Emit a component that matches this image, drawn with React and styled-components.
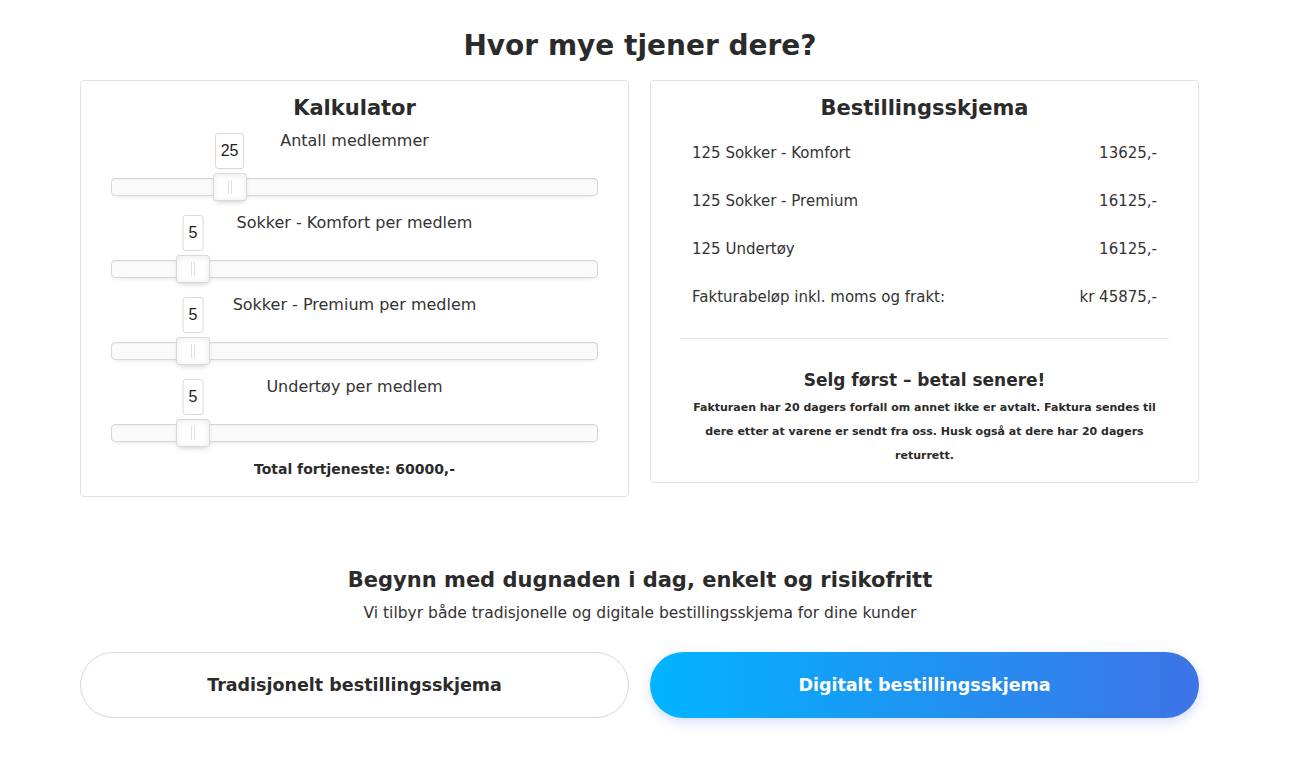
import React from 'react'
import styled, { createGlobalStyle } from 'styled-components'

const GlobalStyle = createGlobalStyle`
  body {
    margin: 0;
    background: #fff;
    color: #333;
    font-family: "DejaVu Sans", "Noto Sans", sans-serif;
  }
`

const Page = styled.div`
  width: 1120px;
  margin-left: 80px;
  padding-top: 28px;
  padding-bottom: 40px;
`

const Title = styled.h1`
  margin: 0 0 16px;
  font-size: 28px;
  line-height: 36px;
  font-weight: 700;
  text-align: center;
  color: #2b2b2b;
`

const Columns = styled.div`
  display: grid;
  grid-template-columns: 549px 549px;
  gap: 21px;
  align-items: start;
`

const Card = styled.div`
  display: flex;
  flex-direction: column;
  border: 1px solid #e2e2e2;
  border-radius: 4px;
  background: #fff;
  padding: ${(p) => p.$pad};
`

const CardTitle = styled.h2`
  margin: 0 0 ${(p) => p.$gap}px;
  font-size: 21px;
  line-height: 30px;
  font-weight: 700;
  text-align: center;
  color: #2b2b2b;
`

const SliderRow = styled.div`
  display: flex;
  flex-direction: column;
  margin-bottom: 17px;
`

const SliderLabel = styled.div`
  font-size: 16px;
  line-height: 20px;
  text-align: center;
  color: #333;
  margin-bottom: 27px;
`

const Track = styled.div`
  position: relative;
  height: 16px;
  background: #fafafa;
  border: 1px solid #d6d6d6;
  border-radius: 4px;
  box-shadow: inset 0 1px 1px #f0f0f0, 0 3px 6px -5px #bbb;
`

const Handle = styled.div`
  position: absolute;
  top: -6px;
  width: 32px;
  height: 26px;
  background: #fff;
  border: 1px solid #d9d9d9;
  border-radius: 3px;
  box-shadow: inset 0 0 1px #fff, inset 0 1px 7px #ebebeb, 0 3px 6px -3px #bbb;

  &::before,
  &::after {
    content: '';
    position: absolute;
    top: 6px;
    width: 1px;
    height: 14px;
    background: #e2e1e0;
  }
  &::before { left: 14px; }
  &::after { left: 17px; }
`

const Tooltip = styled.div`
  position: absolute;
  bottom: calc(100% + 5px);
  left: 50%;
  transform: translateX(-50%);
  padding: 5px;
  border: 1px solid #d9d9d9;
  border-radius: 3px;
  background: #fff;
  color: #222;
  font-family: "Liberation Sans", Arial, sans-serif;
  font-size: 16px;
  line-height: 24px;
  white-space: nowrap;
`

const Total = styled.div`
  font-size: 14px;
  line-height: 20px;
  font-weight: 700;
  text-align: center;
  color: #2b2b2b;
`

const OrderRow = styled.div`
  display: flex;
  justify-content: space-between;
  align-items: center;
  height: 48px;
  padding: 0 12px;
  font-size: 15px;
  color: #333;
`

const Divider = styled.hr`
  margin: 17px 0 29px;
  border: 0;
  border-top: 1px solid #e8e8e8;
`

const NoteTitle = styled.h3`
  margin: 0 0 4px;
  font-size: 17px;
  line-height: 24px;
  font-weight: 700;
  text-align: center;
  color: #2b2b2b;
`

const NoteText = styled.p`
  margin: 0;
  padding: 0 12px;
  font-size: 11px;
  line-height: 24px;
  font-weight: 700;
  text-align: center;
  color: #2b2b2b;
`

const CtaHeading = styled.h2`
  margin: 69px 0 0;
  font-size: 21px;
  line-height: 28px;
  font-weight: 700;
  text-align: center;
  color: #2b2b2b;
`

const CtaText = styled.p`
  margin: 9px 0 0;
  font-size: 15.5px;
  line-height: 20px;
  text-align: center;
  color: #333;
`

const Buttons = styled.div`
  display: grid;
  grid-template-columns: 549px 549px;
  gap: 21px;
  margin-top: 29px;
`

const Button = styled.button`
  height: 66px;
  border-radius: 40px;
  font-family: inherit;
  font-size: 17.5px;
  font-weight: 700;
  cursor: pointer;
  border: ${(p) => (p.$primary ? '0' : '1px solid #d8d8d8')};
  color: ${(p) => (p.$primary ? '#fff' : '#2b2b2b')};
  background: ${(p) => (p.$primary ? 'linear-gradient(to right, #01b4ff, #3d73e6)' : '#fff')};
  box-shadow: ${(p) => (p.$primary ? '0 4px 12px rgba(61, 100, 230, 0.22)' : 'none')};
`

const sliders = [
  { label: 'Antall medlemmer', value: 25, min: 1, max: 100 },
  { label: 'Sokker - Komfort per medlem', value: 5, min: 1, max: 25 },
  { label: 'Sokker - Premium per medlem', value: 5, min: 1, max: 25 },
  { label: 'Undertøy per medlem', value: 5, min: 1, max: 25 },
]

const orders = [
  ['125 Sokker - Komfort', '13625,-'],
  ['125 Sokker - Premium', '16125,-'],
  ['125 Undertøy', '16125,-'],
  ['Fakturabeløp inkl. moms og frakt:', 'kr 45875,-'],
]

const Slider = ({ label, value, min, max }) => {
  const pct = ((value - min) / (max - min)) * 100
  return (
    <SliderRow>
      <SliderLabel>{label}</SliderLabel>
      <Track>
        <Handle style={{ left: `calc(${pct}% - 17px)` }}>
          <Tooltip>{value}</Tooltip>
        </Handle>
      </Track>
    </SliderRow>
  )
}

const App = () => {
  return (
    <Page>
      <GlobalStyle />
      <Title>Hvor mye tjener dere?</Title>
      <Columns>
        <Card $pad="12px 30px 17px">
          <CardTitle $gap={8}>Kalkulator</CardTitle>
          {sliders.map((s) => (
            <Slider key={s.label} {...s} />
          ))}
          <Total>Total fortjeneste: 60000,-</Total>
        </Card>
        <Card $pad="12px 29px 14px">
          <CardTitle $gap={6}>Bestillingsskjema</CardTitle>
          {orders.map(([name, price]) => (
            <OrderRow key={name}>
              <span>{name}</span>
              <span>{price}</span>
            </OrderRow>
          ))}
          <Divider />
          <NoteTitle>Selg først – betal senere!</NoteTitle>
          <NoteText>
            Fakturaen har 20 dagers forfall om annet ikke er avtalt. Faktura sendes til dere etter at
            varene er sendt fra oss. Husk også at dere har 20 dagers returrett.
          </NoteText>
        </Card>
      </Columns>
      <CtaHeading>Begynn med dugnaden i dag, enkelt og risikofritt</CtaHeading>
      <CtaText>Vi tilbyr både tradisjonelle og digitale bestillingsskjema for dine kunder</CtaText>
      <Buttons>
        <Button>Tradisjonelt bestillingsskjema</Button>
        <Button $primary>Digitalt bestillingsskjema</Button>
      </Buttons>
    </Page>
  )
}

export default App
